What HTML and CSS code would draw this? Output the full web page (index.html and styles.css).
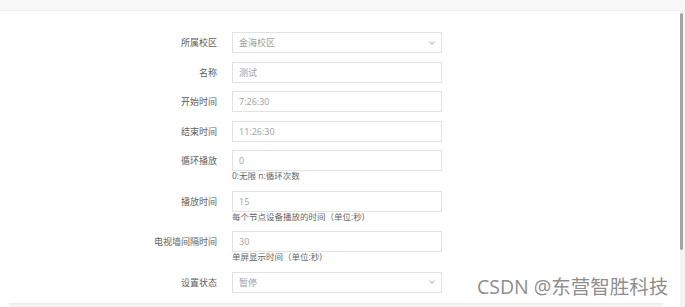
FILE: index.html
```html
<!DOCTYPE html>
<html lang="zh-CN">
<head>
<meta charset="UTF-8">
<title>编辑</title>
<link rel="stylesheet" href="styles.css">
</head>
<body>
<div class="modal">
  <div class="modal-header">
    <span class="modal-title">编辑播放</span>
    <span class="modal-close">×</span>
  </div>
  <div class="modal-content">
    <div class="modal-body">
      <div class="form-row">
        <label>所属校区</label>
        <div class="fake-select">
          <span>金海校区</span>
          <svg width="6" height="4" viewBox="0 0 6 4"><path d="M0.5 0.8 L3 3.2 L5.5 0.8" fill="none" stroke="#999" stroke-width="1"/></svg>
        </div>
      </div>
      <div class="form-row">
        <label>名称</label>
        <input type="text" value="测试">
      </div>
      <div class="form-row">
        <label>开始时间</label>
        <input type="text" value="7:26:30">
      </div>
      <div class="form-row">
        <label>结束时间</label>
        <input type="text" value="11:26:30">
      </div>
      <div class="form-row has-help">
        <label>循环播放</label>
        <input type="text" value="0">
        <div class="help">0:无限 n:循环次数</div>
      </div>
      <div class="form-row has-help">
        <label>播放时间</label>
        <input type="text" value="15">
        <div class="help">每个节点设备播放的时间（单位:秒)</div>
      </div>
      <div class="form-row has-help">
        <label>电视墙间隔时间</label>
        <input type="text" value="30">
        <div class="help">单屏显示时间（单位:秒)</div>
      </div>
      <div class="form-row">
        <label>设置状态</label>
        <div class="fake-select">
          <span>暂停</span>
          <svg width="6" height="4" viewBox="0 0 6 4"><path d="M0.5 0.8 L3 3.2 L5.5 0.8" fill="none" stroke="#999" stroke-width="1"/></svg>
        </div>
      </div>
      <div class="footer-line"></div>
    </div>
    <div class="scrollbar">
      <div class="thumb"></div>
    </div>
  </div>
  <div class="watermark">CSDN @东营智胜科技</div>
</div>
</body>
</html>
```

FILE: styles.css
```css
body {
  margin: 0;
  font-family: "Open Sans", "Noto Sans CJK SC", sans-serif;
  background-color: #ffffff;
}
.modal {
  position: relative;
  width: 685px;
  height: 307px;
  overflow: hidden;
}
.modal-header {
  height: 10px;
  background-color: #f8f8f8;
  border-bottom: 1px solid #eeeeee;
  display: flex;
  justify-content: space-between;
  align-items: flex-end;
  padding: 0 10px 0 8px;
  overflow: hidden;
  font-size: 12px;
  line-height: 14px;
  color: #333333;
}
.modal-title,
.modal-close {
  margin-bottom: 8px;
}
.modal-content {
  display: flex;
  height: 296px;
}
.modal-body {
  flex: 1;
  padding-top: 21px;
}
.form-row {
  display: grid;
  grid-template-columns: 217px 210px;
  column-gap: 15px;
  align-items: center;
  margin-bottom: 8.5px;
}
.form-row.has-help {
  margin-bottom: 9.5px;
}
.form-row label {
  text-align: right;
  font-size: 9px;
  color: #606060;
}
.form-row input,
.fake-select {
  box-sizing: border-box;
  height: 21px;
  width: 210px;
  margin: 0;
  padding: 0 6px;
  border: 1px solid #e2e2e2;
  background-color: #ffffff;
  font-family: inherit;
  font-size: 9px;
  color: #a0a0a0;
  outline: none;
}
.fake-select {
  display: flex;
  justify-content: space-between;
  align-items: center;
}
.help {
  grid-column: 2;
  font-size: 8.5px;
  line-height: 10px;
  color: #666666;
}
.footer-line {
  margin: 10px 0 0 9px;
  width: 654px;
  height: 6px;
  background-color: #f3f3f3;
  border-top: 1px solid #ebebeb;
}
.scrollbar {
  width: 5px;
  background-color: #f4f4f4;
  padding-top: 2px;
}
.thumb {
  width: 3px;
  height: 237px;
  background-color: #a5a5a5;
  border-radius: 2px;
}
.watermark {
  position: absolute;
  left: 477px;
  top: 275px;
  font-size: 19.5px;
  line-height: 24px;
  color: #8e8e8e;
  white-space: nowrap;
}
```
